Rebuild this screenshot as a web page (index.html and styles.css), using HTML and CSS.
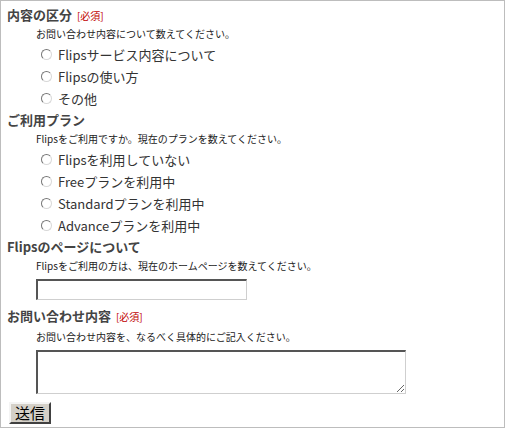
FILE: index.html
```html
<!DOCTYPE html>
<html lang="ja">
<head>
<meta charset="utf-8">
<title>お問い合わせ</title>
<link rel="stylesheet" href="styles.css">
</head>
<body>
<form class="page">
  <div class="section">
    <div class="title">内容の区分 <span class="req">[必須]</span></div>
    <div class="desc">お問い合わせ内容について数えてください。</div>
    <div class="options">
      <label class="opt"><input type="radio" name="kind"><span>Flipsサービス内容について</span></label>
      <label class="opt"><input type="radio" name="kind"><span>Flipsの使い方</span></label>
      <label class="opt"><input type="radio" name="kind"><span>その他</span></label>
    </div>
  </div>
  <div class="section">
    <div class="title">ご利用プラン</div>
    <div class="desc">Flipsをご利用ですか。現在のプランを数えてください。</div>
    <div class="options">
      <label class="opt"><input type="radio" name="plan"><span>Flipsを利用していない</span></label>
      <label class="opt"><input type="radio" name="plan"><span>Freeプランを利用中</span></label>
      <label class="opt"><input type="radio" name="plan"><span>Standardプランを利用中</span></label>
      <label class="opt"><input type="radio" name="plan"><span>Advanceプランを利用中</span></label>
    </div>
  </div>
  <div class="section">
    <div class="title">Flipsのページについて</div>
    <div class="desc">Flipsをご利用の方は、現在のホームページを数えてください。</div>
    <div class="field"><input type="text" class="text"></div>
  </div>
  <div class="section message">
    <div class="title">お問い合わせ内容 <span class="req">[必須]</span></div>
    <div class="desc">お問い合わせ内容を、なるべく具体的にご記入ください。</div>
    <div class="field"><textarea class="area"></textarea></div>
  </div>
  <div class="actions"><button type="button" class="submit">送信</button></div>
</form>
</body>
</html>
```

FILE: styles.css
```css
html, body {
  margin: 0;
  padding: 0;
  background: #ffffff;
}
.page {
  box-sizing: border-box;
  width: 505px;
  height: 428px;
  border: 1px solid #bdbdbd;
  padding: 5px 0 0 0;
  font-family: "Noto Sans CJK JP", "Liberation Sans", sans-serif;
  color: #333;
  display: flex;
  flex-direction: column;
}
.section {
  display: flex;
  flex-direction: column;
}
.section + .section {
  margin-top: 2px;
}
.section.message {
  margin-top: 7px;
}
.title {
  height: 18px;
  line-height: 18px;
  font-size: 13px;
  font-weight: bold;
  color: #444;
  padding-left: 6px;
  white-space: nowrap;
}
.req {
  font-size: 10px;
  font-weight: normal;
  color: #c00000;
  margin-left: 2px;
}
.desc {
  height: 19px;
  line-height: 19px;
  font-size: 10px;
  color: #222;
  padding-left: 35px;
  white-space: nowrap;
}
.message .desc {
  margin-top: 2px;
}
.options {
  display: flex;
  flex-direction: column;
  padding-left: 40px;
}
.opt {
  height: 22px;
  display: flex;
  align-items: center;
  gap: 6px;
  font-size: 13px;
  color: #333;
  white-space: nowrap;
}
.opt input {
  appearance: none;
  -webkit-appearance: none;
  margin: 0;
  box-sizing: border-box;
  width: 11px;
  height: 11px;
  border-radius: 50%;
  border: 1px solid;
  border-color: #777 #d8d8d8 #d8d8d8 #777;
  background: #fff;
}
.field {
  padding-left: 35px;
  margin-top: 4px;
  display: flex;
}
.message .field {
  margin-top: 4px;
}
.text {
  box-sizing: border-box;
  width: 211px;
  height: 21px;
  margin: 0;
  padding: 1px 3px;
  border-style: solid;
  border-width: 2px 1px 1px 2px;
  border-color: #555 #cfcfcf #cfcfcf #555;
  background: #fff;
  font-size: 12px;
}
.area {
  box-sizing: border-box;
  width: 370px;
  height: 44px;
  margin: 0;
  padding: 2px;
  border-style: solid;
  border-width: 2px 1px 1px 2px;
  border-color: #555 #cfcfcf #cfcfcf #555;
  background: #fff;
  font-size: 12px;
  display: block;
}
.actions {
  padding-left: 8px;
  margin-top: 8px;
  display: flex;
}
.submit {
  box-sizing: border-box;
  width: 42px;
  height: 22px;
  margin: 0;
  padding: 0;
  font-family: "Noto Sans CJK JP", sans-serif;
  font-size: 15px;
  line-height: 18px;
  color: #000;
  background: #d4d0c8;
  border: 2px solid;
  border-color: #f4f4f4 #404040 #404040 #f4f4f4;
}
```
